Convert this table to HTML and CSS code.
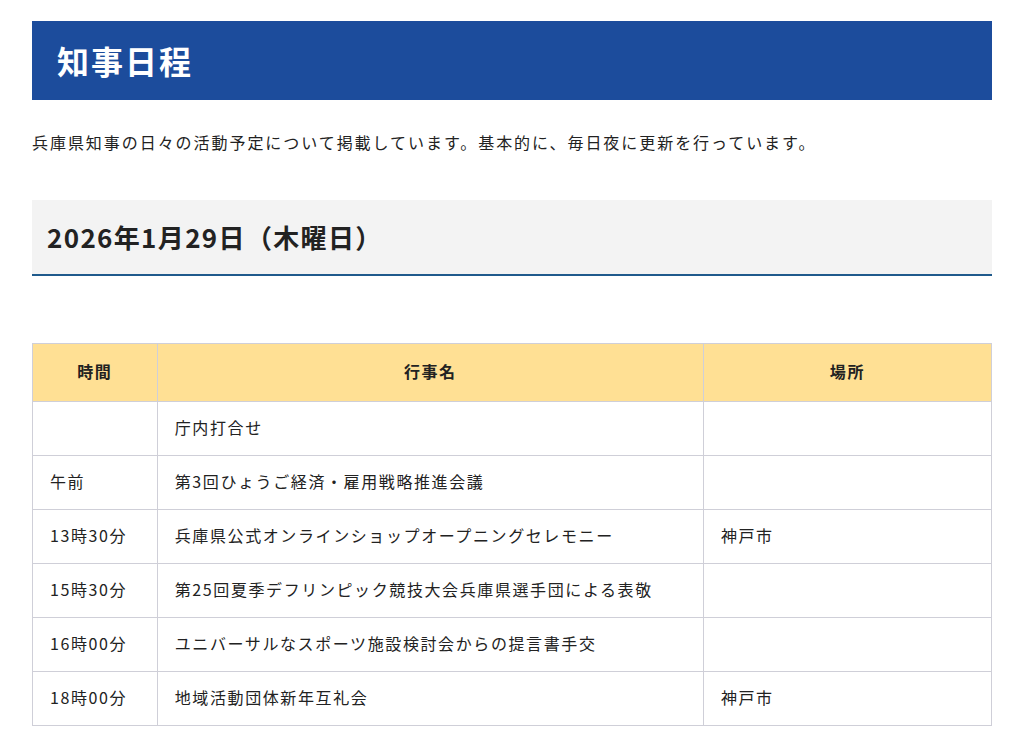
FILE: index.html
```html
<!DOCTYPE html>
<html lang="ja">
<head>
<meta charset="utf-8">
<link rel="stylesheet" href="styles.css">
</head>
<body>
<div class="page">
  <h1 class="title">知事日程</h1>
  <p class="lead">兵庫県知事の日々の活動予定について掲載しています。基本的に、毎日夜に更新を行っています。</p>
  <h2 class="date">2026年1月29日（木曜日）</h2>
  <table class="sched">
    <thead>
      <tr><th class="c1">時間</th><th class="c2">行事名</th><th class="c3">場所</th></tr>
    </thead>
    <tbody>
      <tr><td></td><td>庁内打合せ</td><td></td></tr>
      <tr><td>午前</td><td>第3回ひょうご経済・雇用戦略推進会議</td><td></td></tr>
      <tr><td>13時30分</td><td>兵庫県公式オンラインショップオープニングセレモニー</td><td>神戸市</td></tr>
      <tr><td>15時30分</td><td>第25回夏季デフリンピック競技大会兵庫県選手団による表敬</td><td></td></tr>
      <tr><td>16時00分</td><td>ユニバーサルなスポーツ施設検討会からの提言書手交</td><td></td></tr>
      <tr><td>18時00分</td><td>地域活動団体新年互礼会</td><td>神戸市</td></tr>
    </tbody>
  </table>
</div>
</body>
</html>
```
FILE: styles.css
```css
html, body {
  margin: 0;
  padding: 0;
  background: #fff;
}
body {
  font-family: "Noto Sans CJK JP", "Noto Sans", sans-serif;
  color: #222;
}
.page {
  width: 960px;
  margin: 0 32px;
  padding-top: 21px;
}
.title {
  margin: 0;
  height: 79px;
  box-sizing: border-box;
  background: #1c4c9c;
  color: #fff;
  font-size: 32px;
  font-weight: 700;
  line-height: 79px;
  padding-left: 25px;
  letter-spacing: 2px;
}
.lead {
  margin: 30px 0 0;
  font-size: 16px;
  line-height: 24px;
  letter-spacing: 1.95px;
  color: #222;
}
.date {
  margin: 46px 0 0;
  height: 76px;
  box-sizing: border-box;
  background: #f3f3f3;
  border-bottom: 2px solid #1f5a8c;
  font-size: 26px;
  font-weight: 700;
  line-height: 74px;
  padding-left: 15px;
  letter-spacing: 1.35px;
  color: #222;
}
.sched {
  margin-top: 67px;
  width: 960px;
  border-collapse: collapse;
  font-size: 16px;
  letter-spacing: 0.1em;
}
.sched th, .sched td {
  border: 1px solid #cfcfd8;
}
.sched th {
  background: #ffe094;
  height: 54px;
  font-weight: 700;
  text-align: center;
  padding: 0 0 3px;
}
.sched td {
  height: 50px;
  padding: 0 17px 3px;
  text-align: left;
}
.c1 { width: 124px; }
.c2 { width: 547px; }
.c3 { width: 288px; }
```
